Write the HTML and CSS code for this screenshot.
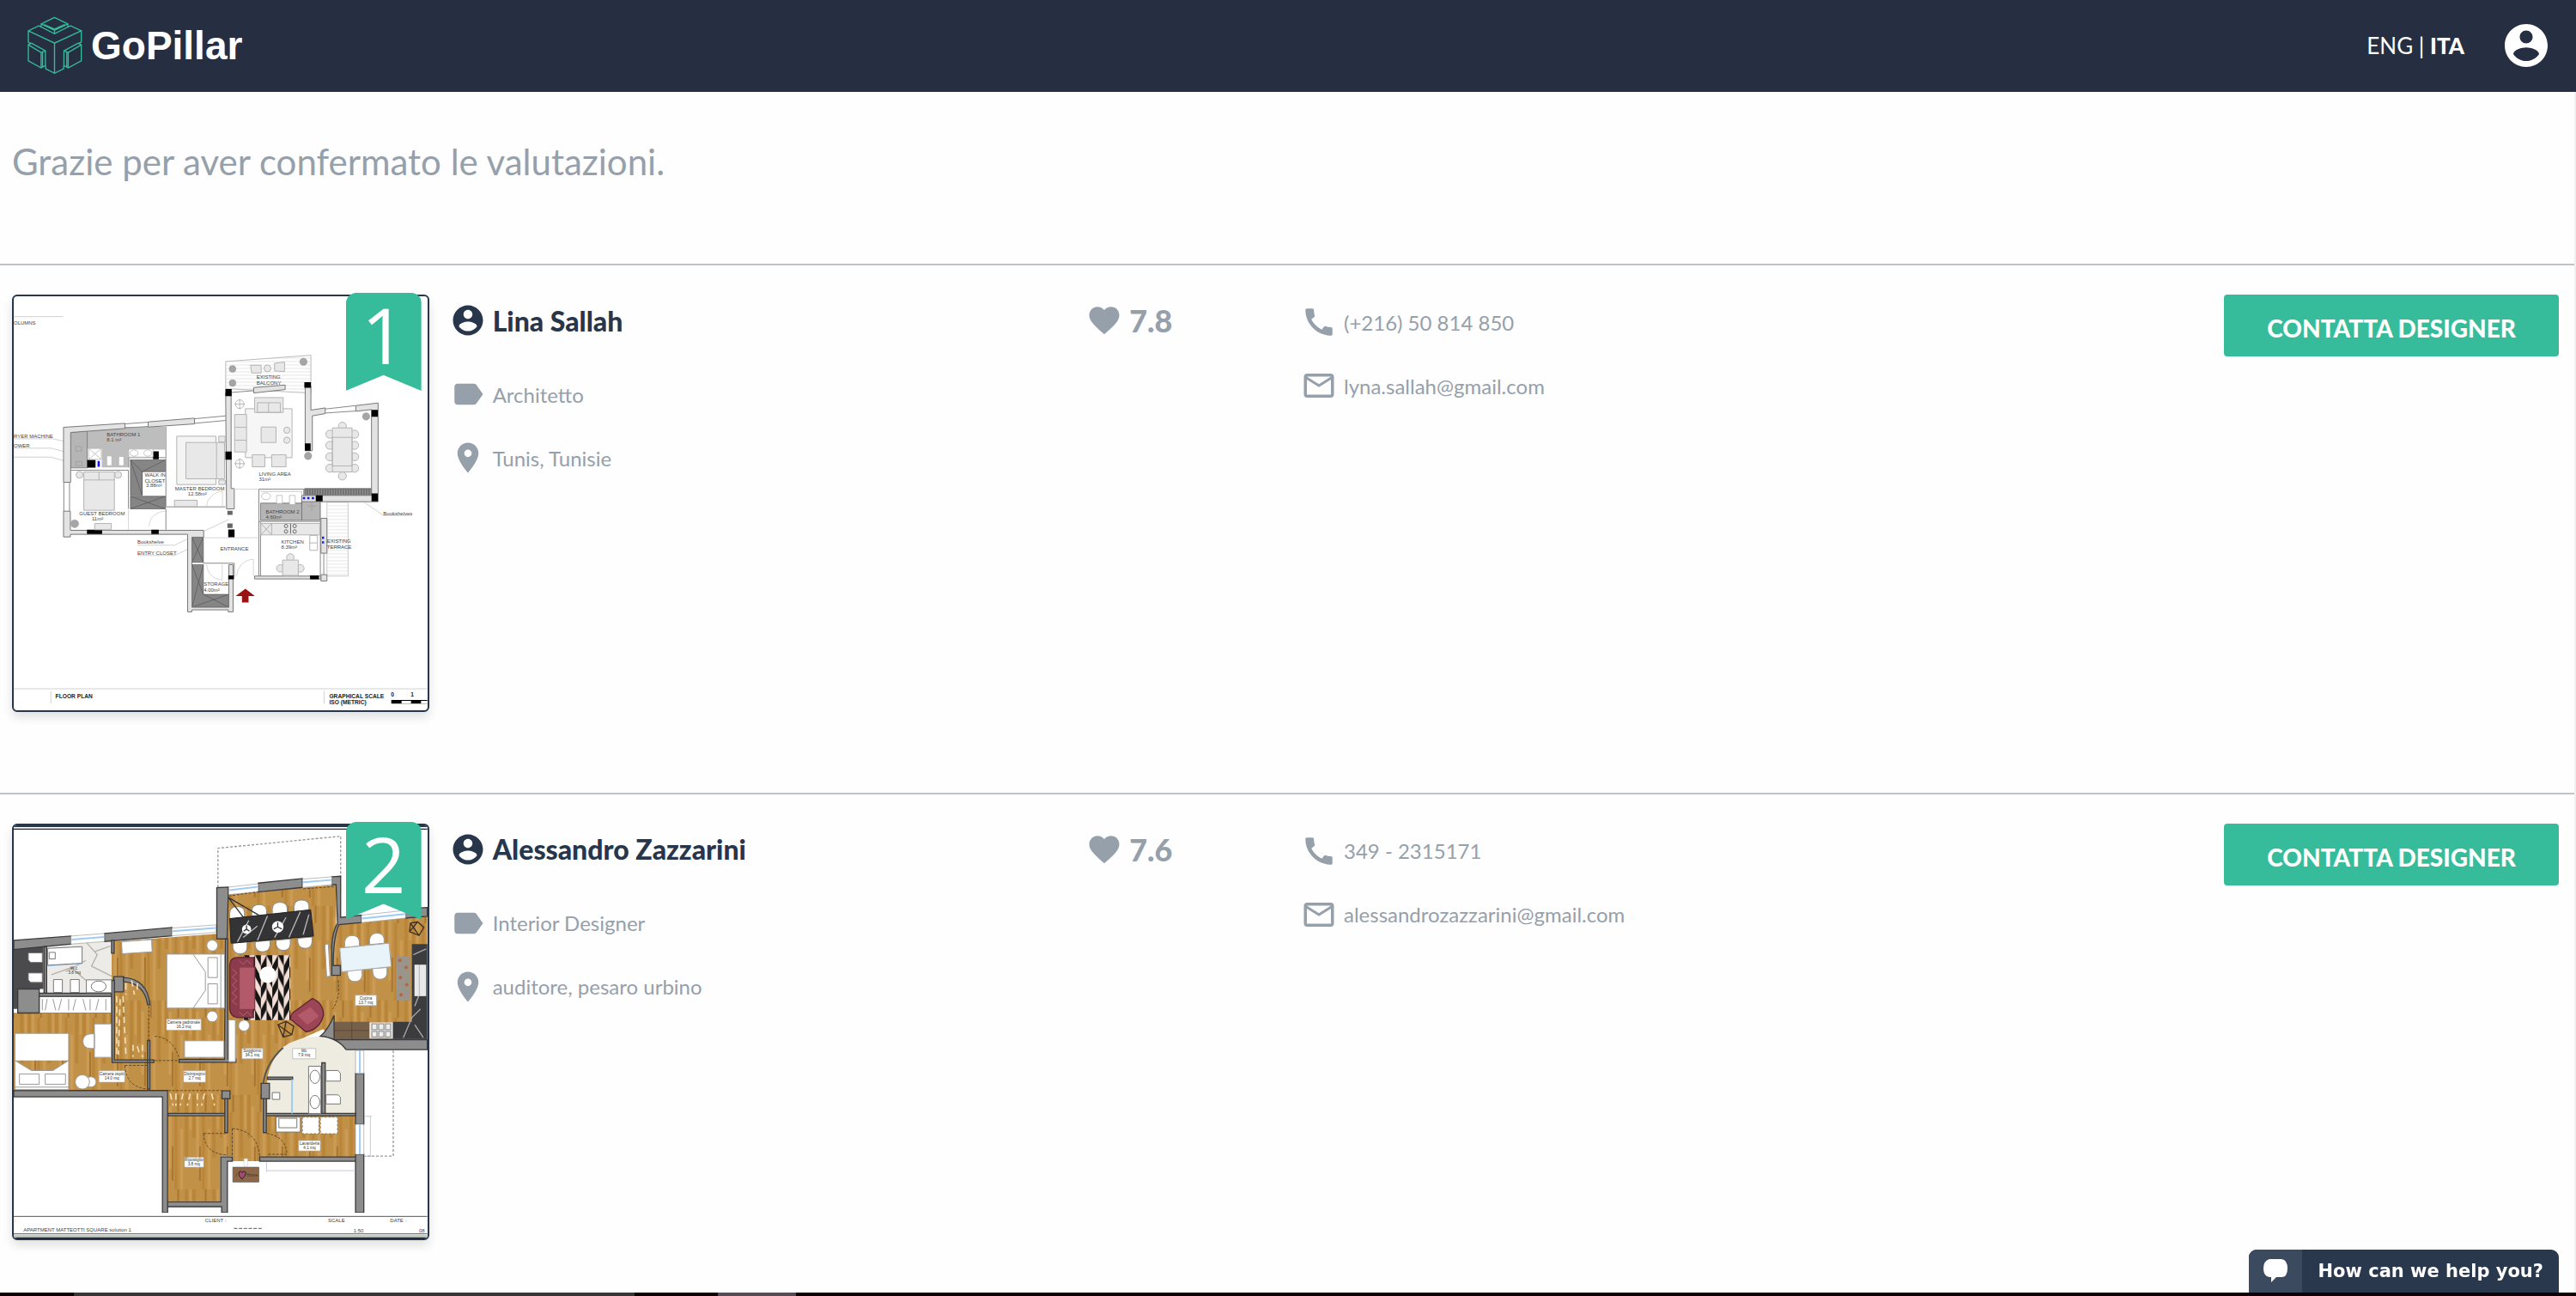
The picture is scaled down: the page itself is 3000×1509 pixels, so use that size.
FILE: index.html
```
<!DOCTYPE html>
<html lang="it">
<head>
  <meta charset="UTF-8" />
  <meta name="viewport" content="width=device-width, initial-scale=1.0">
  <title>GoPillar</title>
  <link rel="stylesheet" href="styles.css">
</head>
<body>

<svg class="sprite" aria-hidden="true">
  <symbol id="i-account" viewBox="0 0 24 24"><path d="M12 2C6.48 2 2 6.48 2 12s4.48 10 10 10 10-4.48 10-10S17.52 2 12 2zm0 3c1.66 0 3 1.34 3 3s-1.34 3-3 3-3-1.34-3-3 1.34-3 3-3zm0 14.2c-2.5 0-4.71-1.28-6-3.22.03-1.99 4-3.08 6-3.08 1.99 0 5.97 1.09 6 3.08-1.29 1.94-3.5 3.22-6 3.22z"/></symbol>
  <symbol id="i-label" viewBox="0 0 24 24"><path d="M17.63 5.84C17.27 5.33 16.67 5 16 5L5 5.01C3.9 5.01 3 5.9 3 7v10c0 1.1.9 1.99 2 1.99L16 19c.67 0 1.27-.33 1.63-.84L22 12l-4.37-6.16z"/></symbol>
  <symbol id="i-place" viewBox="0 0 24 24"><path d="M12 2C8.13 2 5 5.13 5 9c0 5.25 7 13 7 13s7-7.75 7-13c0-3.87-3.13-7-7-7zm0 9.5c-1.38 0-2.5-1.12-2.5-2.5s1.12-2.5 2.5-2.5 2.5 1.12 2.5 2.5-1.12 2.5-2.5 2.5z"/></symbol>
  <symbol id="i-heart" viewBox="0 0 24 24"><path d="M12 21.35l-1.45-1.32C5.4 15.36 2 12.28 2 8.5 2 5.42 4.42 3 7.5 3c1.74 0 3.41.81 4.5 2.09C13.09 3.81 14.76 3 16.5 3 19.58 3 22 5.42 22 8.5c0 3.78-3.4 6.86-8.55 11.54L12 21.35z"/></symbol>
  <symbol id="i-phone" viewBox="0 0 24 24"><path d="M20.01 15.38c-1.23 0-2.42-.2-3.53-.56-.35-.12-.74-.03-1.01.24l-1.57 1.97c-2.83-1.35-5.48-3.9-6.89-6.83l1.95-1.66c.27-.28.35-.67.24-1.02-.37-1.11-.56-2.3-.56-3.53 0-.54-.45-.99-.99-.99H4.19C3.65 3 3 3.24 3 3.99 3 13.28 10.73 21 20.01 21c.71 0 .99-.63.99-1.18v-3.45c0-.54-.45-.99-.99-.99z"/></symbol>
  <symbol id="i-mail" viewBox="0 0 24 24"><path d="M20 4H4c-1.1 0-1.99.9-1.99 2L2 18c0 1.1.9 2 2 2h16c1.1 0 2-.9 2-2V6c0-1.1-.9-2-2-2zm0 14H4V8l8 5 8-5v10zm-8-7L4 6h16l-8 5z"/></symbol>
</svg>

<header class="topbar">
  <a class="logo" href="#">
    <svg class="logo-mark" viewBox="37 32 193 203" aria-hidden="true">
      <path d="M132 35L179 58V68L132 92L85 68V58ZM85 58L132 80L179 58M132 80V92M95 60L132 76L168 60"/>
      <path d="M85 69L77 64L40 82V122L50 128M40 82L132 125L226 82L188 64L179 69M226 82V121L216 127M132 125V231"/>
      <path d="M50 125L40 131V187L85 212L100 204V152L50 125M40 131L85 158V212M85 158L100 152M90 158V208"/>
      <path d="M216 125L226 131V187L180 212L165 204V152L216 125M226 131L180 158V212M180 158L165 152M175 158V208"/>
      <path d="M101 204V215L132 231L164 215V204"/>
    </svg>
    <span>GoPillar</span>
  </a>
  <nav class="topbar-nav">
    <span class="langs"><a href="#">ENG</a> | <a class="active" href="#">ITA</a></span>
    <button class="account" type="button" aria-label="Account"><svg><use href="#i-account"/></svg></button>
  </nav>
</header>

<main>
  <h1>Grazie per aver confermato le valutazioni.</h1>

  <article class="designer">
    <div class="preview">
      <svg class="plan" viewBox="48 42 1446 1446" role="img" aria-label="Floor plan">
        <defs>
          <pattern id="deck" width="12" height="12" patternUnits="userSpaceOnUse"><path d="M0 6H12" stroke="#d8d8d8" stroke-width="2"/></pattern>
          <pattern id="shelf" width="9" height="30" patternUnits="userSpaceOnUse"><path d="M0 0H9V30H0z" fill="#999"/><path d="M3 0V30" stroke="#444" stroke-width="3"/></pattern>
        </defs>
        <g stroke="#bbb" stroke-width="2" fill="none">
          <path d="M48 113H221M48 540H185L300 566M48 573H180L270 598M48 604H178L275 632M48 1414H1494M178 1422V1466M1133 1422V1466"/>
          <path d="M480 912H610L800 822M480 948H610L680 915M1440 808H1340L1235 735"/>
        </g>
        <path d="M789 270L1087 248V380L789 365z" fill="url(#deck)" stroke="#bbb" stroke-width="3"/>
        <path d="M1143 760H1217V1020H1143z" fill="url(#deck)" stroke="#ccc" stroke-width="3"/>
        <!-- rooms -->
        <g stroke="#555" stroke-width="2">
          <path d="M306 498L578 498V578H450V640H356V574H306z" fill="#bdbdbd" stroke="none"/>
          <path d="M247 518L305 512V642H247z" fill="#b5b5b5"/>
          <path d="M456 614H578V655H497V738H456z" fill="#858585"/>
          <path d="M456 741H578V785H456z" fill="#858585"/>
          <path d="M456 614L497 655V738L456 614M497 655L578 614M456 785L578 741M456 741L578 785" fill="none"/>
          <path d="M911 765H940L1055 765V740H1120V825H911z" fill="#b5b5b5"/>
          <path d="M1055 760V825" fill="none"/>
          <path d="M671 884H711V972H671z" fill="#858585"/>
          <path d="M671 980H711V1084H800V1129H671z" fill="#858585"/>
          <path d="M671 884L711 972M711 884L671 972M671 980L711 1084M711 980L671 1129M711 1084L800 1129M800 1084L671 1129" fill="none"/>
          <path d="M1065 714H1298V738H1065z" fill="url(#shelf)"/>
        </g>
        <!-- walls -->
        <g fill="#e3e3e3" stroke="#777" stroke-width="3">
          <path d="M222 500L437 486V504L247 518V692H222z"/>
          <path d="M518 481L680 468V488L518 499z"/>
          <path d="M222 793H246V860H712V884H671V1129H800V980H815V1145H798V1138H671V1145H656V874H246V883H222z"/>
          <path d="M789 380H808V714H819V785H792z"/>
          <path d="M887 361L997 352V368L887 380z"/>
          <path d="M1067 355H1087V440L1137 432V452L1092 460V582H1067z"/>
          <path d="M1244 424L1322 415V760H1055V738H1299V438L1244 444z"/>
          <path d="M1122 818H1143V940H1122zM1122 1015H1143V1037H1122z"/>
          <path d="M890 1020H1122V1030H890z"/>
        </g>
        <g fill="none" stroke="#888" stroke-width="3">
          <path d="M223 692V793M243 692V793M437 488L518 482M437 502L518 497M680 470L789 460M680 486L789 476M810 378L887 372M1137 436L1244 424M1137 450L1244 443"/>
          <path d="M247 650H449V785M580 498V778H788M580 785V858M450 640V606H578M905 1020V716H1062V740M905 829H1122M711 975H819V1020"/>
          <path d="M911 830V1020M1120 830V1020M1132 940V1015"/>
        </g>
        <g fill="none" stroke="#c4c4c4" stroke-width="2">
          <path d="M722 777A60 54 0 0 1 778 724V777M521 846A58 54 0 0 1 578 793M828 1020A60 60 0 0 1 886 961V1020M723 980A54 54 0 0 0 777 1033V980M449 790V858M808 716H903M715 886H905"/>
        </g>
        <g fill="#000">
          <path d="M788 366h22v25h-22zM788 585h22v28h-22zM1064 342h23v20h-23zM1299 439h22v24h-22zM1066 556h20v26h-20zM1299 731h22v28h-22zM1104 738h24v21h-24zM305 614h29v27h-29zM535 584h20v28h-20zM304 858h53v15h-53zM529 858h26v15h-26zM798 857h22v27h-22zM798 1018h20v13h-20zM1084 1018h31v13h-31z"/>
          <path d="M795 792h18v14h-18zM795 836h18v16h-18z" fill="#666"/>
        </g>
        <path d="M341 618h8v20h-8zM1059 744h8v7h-8zM1074 744h8v7h-8zM1090 744h8v7h-8zM1126 882h7v8h-7zM1126 898h7v8h-7z" fill="#1414ff"/>
        <!-- furniture -->
        <g fill="#e8e8e8" stroke="#b4b4b4" stroke-width="3">
          <path d="M618 531H755V700H618z" fill="#f4f4f4"/><path d="M650 553H785V680H650zM757 553V680M765 531h22v20h-22zM765 684h22v16h-22z"/>
          <path d="M293 656H400V790H293zM293 684H400M346 656V684"/>
          <circle cx="278" cy="666" r="12"/><circle cx="413" cy="666" r="12"/>
          <path d="M858 435H1021V606H858z" fill="#f6f6f6"/>
          <path d="M890 396H990V448H890zM900 414H980V448H900zM939 414V448M820 455H862V586H820zM820 500H862M820 545H862M913 499H965V553H913z"/>
          <path d="M882 596H926V638H882zM950 596H1000V638H950zM610 755H689V777H610zM331 836H389V858H331z"/>
          <circle cx="1003" cy="510" r="11"/><circle cx="1003" cy="545" r="11"/>
          <circle cx="1153" cy="524" r="14"/><circle cx="1153" cy="563" r="14"/><circle cx="1153" cy="603" r="14"/><circle cx="1153" cy="643" r="14"/>
          <circle cx="1240" cy="524" r="14"/><circle cx="1240" cy="563" r="14"/><circle cx="1240" cy="603" r="14"/><circle cx="1240" cy="643" r="14"/>
          <circle cx="1197" cy="496" r="14"/><circle cx="1197" cy="670" r="14"/><path d="M1162 502H1231V656H1162zM1162 535H1231V635H1162z"/>
          <path d="M876 283L913 283V310L880 310zM960 276L995 272V305L960 303z"/><circle cx="935" cy="294" r="12"/>
          <path d="M912 836H1118V876H912zM950 836V876M912 836L950 876M950 836L912 876"/>
          <path d="M1083 878H1110V930H1083zM1083 904H1110" fill="#fff"/>
          <circle cx="1015" cy="955" r="13"/><circle cx="980" cy="993" r="13"/><circle cx="1050" cy="993" r="13"/><path d="M988 964H1043V1018H988z"/>
        </g>
        <g fill="#fff" stroke="#aaa" stroke-width="2">
          <path d="M310 574H354V612H310zL354 612M354 574L310 612M450 576H535V604H450z"/>
          <ellipse cx="469" cy="590" rx="14" ry="11"/><ellipse cx="517" cy="590" rx="14" ry="11"/>
          <path d="M373 600h18v34h-18zM415 602h18v32h-18zM967 738h20v28h-20zM1012 738h20v32h-20z"/><ellipse cx="930" cy="741" rx="16" ry="12"/>
          <path d="M911 724H1055V738"/>
        </g>
        <g fill="none" stroke="#666" stroke-width="3"><circle cx="1000" cy="845" r="6"/><circle cx="1030" cy="845" r="6"/><circle cx="1000" cy="864" r="6"/><circle cx="1030" cy="864" r="6"/><path d="M1016 836V872"/></g>
        <g fill="none" stroke="#999" stroke-width="2"><circle cx="838" cy="419" r="15"/><circle cx="838" cy="627" r="15"/><path d="M820 419H856M838 401V437M820 627H856M838 609V645M265 583h20v-16h-20zM265 634h22v-14h-22zM1075 775h30M1090 762v30"/></g>
        <g fill="#a5a5a5" stroke="#888"><circle cx="813" cy="296" r="12"/><circle cx="813" cy="345" r="12"/><circle cx="1061" cy="271" r="13"/><circle cx="1280" cy="462" r="13"/><circle cx="1077" cy="600" r="13"/><circle cx="261" cy="837" r="14"/></g>
        <path d="M858 1064L891 1090H869V1112H846V1090H824z" fill="#9b1414"/>
        <g class="plan-text">
          <text x="48" y="140">OLUMNS</text><text x="48" y="536">RYER MACHINE</text><text x="48" y="569">OWER</text>
          <text x="373" y="531">BATHROOM 1</text><text x="373" y="548">8.1 m²</text>
          <text x="506" y="671">WALK IN</text><text x="506" y="692">CLOSET</text><text x="510" y="708">3.88m²</text>
          <text x="612" y="721">MASTER BEDROOM</text><text x="657" y="740">12.58m²</text>
          <text x="277" y="808">GUEST BEDROOM</text><text x="321" y="827">11m²</text>
          <text x="897" y="330">EXISTING</text><text x="897" y="351">BALCONY</text>
          <text x="905" y="668">LIVING AREA</text><text x="905" y="688">31m²</text>
          <text x="929" y="802">BATHROOM 2</text><text x="929" y="819">4.60m²</text>
          <text x="983" y="906">KITCHEN</text><text x="983" y="924">8.39m²</text>
          <text x="1143" y="905">EXISTING</text><text x="1143" y="924">TERRACE</text>
          <text x="770" y="931">ENTRANCE</text><text x="712" y="1054">STORAGE</text><text x="712" y="1074">4.00m²</text>
          <text x="480" y="908">Bookshelve</text><text x="480" y="945">ENTRY CLOSET</text><text x="1340" y="807">Bookshelves</text>
        </g>
        <g class="plan-text strong">
          <text x="194" y="1446">FLOOR PLAN</text><text x="1151" y="1446">GRAPHICAL SCALE</text><text x="1151" y="1468">ISO (METRIC)</text><text x="1367" y="1441">0</text><text x="1436" y="1441">1</text>
        </g>
        <path d="M1368 1453H1494V1466H1368zM1404 1456H1437V1465H1404zM1472 1456H1494V1465H1472z" fill-rule="evenodd"/>
      </svg>
      <span class="ribbon">1</span>
    </div>
    <div class="profile">
      <h2 class="item name"><svg><use href="#i-account"/></svg>Lina Sallah</h2>
      <p class="item"><svg><use href="#i-label"/></svg>Architetto</p>
      <p class="item"><svg><use href="#i-place"/></svg>Tunis, Tunisie</p>
    </div>
    <div class="score">
      <p class="item"><svg><use href="#i-heart"/></svg>7.8</p>
    </div>
    <div class="contacts">
      <p class="item"><svg><use href="#i-phone"/></svg>(+216) 50 814 850</p>
      <p class="item"><svg><use href="#i-mail"/></svg>lyna.sallah@gmail.com</p>
    </div>
    <div class="action">
      <button class="btn" type="button">CONTATTA DESIGNER</button>
    </div>
  </article>

  <article class="designer">
    <div class="preview">
      <svg class="plan" viewBox="48 48 1446 1446" role="img" aria-label="Apartment Matteotti Square">
        <defs>
          <pattern id="wood" width="96" height="330" patternUnits="userSpaceOnUse">
            <path d="M0 0H96V330H0z" fill="#c29148"/>
            <path d="M0 0H12V150H0zM34 60H44V330H34zM70 0H82V220H70z" fill="#b98539"/>
            <path d="M14 40H24V260H14zM54 120H64V330H54zM86 0H94V120H86z" fill="#cc9c54"/>
            <path d="M44 0H50V60H44zM24 180H30V300H24z" fill="#a87530"/>
          </pattern>
          <pattern id="rug" x="852" y="502" width="40" height="76" patternUnits="userSpaceOnUse">
            <path d="M0 0H40V76H0z" fill="#f3dfd5"/>
            <path d="M0 0L20 0V38zM20 38H40V0zM0 38V76H20zM20 38H40L20 76z" fill="#151515"/>
          </pattern>
        </defs>
        <path d="M48 48H1494V54H48z" fill="#28364b"/>
        <path d="M48 61H1494" stroke="#222" stroke-width="4"/>
        <path d="M762 265V128L1191 86V230M1375 835V1204H1275" fill="none" stroke="#999" stroke-width="4" stroke-dasharray="9 6"/>
        <!-- wooden floors -->
        <g fill="url(#wood)">
          <path d="M390 455L790 425V290L1175 255V400L1185 390L1494 365V798H1165L1130 760L985 825L935 930V1210H908V1222H812V1205H770V1362H588V975H48V703H390z"/>
          <path d="M932 1062H1243V1208H932z"/>
        </g>
        <!-- bathrooms -->
        <path d="M48 480L152 470V620H62V690H48z" fill="#4b4b4e"/>
        <path d="M163 462L390 452V635H163z" fill="#ecebe8"/>
        <path d="M300 455L340 500L320 540L390 575M230 560L300 520M330 490L385 470M180 570L250 545L300 590" fill="none" stroke="#b5b2aa" stroke-width="4"/>
        <path d="M137 646H390V704H137z" fill="#fff" stroke="#888" stroke-width="3"/>
        <path d="M935 1055V930Q950 850 1010 810Q1100 765 1185 805L1210 830H1243V1055z" fill="#eeece1"/>
        <!-- kitchen -->
        <path d="M1440 463H1494V795H1375V735H1440z" fill="#3c3c3e"/>
        <path d="M1445 500L1490 480M1450 680L1485 590M1410 790L1440 720L1470 690M1480 790L1450 745" stroke="#aaa" stroke-width="4" fill="none"/>
        <path d="M1168 735H1292V795H1168z" fill="#76604a"/><path d="M1230 735V795M1168 765H1292" stroke="#5b4937" stroke-width="3"/>
        <path d="M1292 737H1372V792H1292z" fill="#eee"/>
        <g fill="none" stroke="#999" stroke-width="4"><path d="M1300 742h18v20h-18zM1324 742h18v20h-18zM1348 742h18v20h-18zM1300 768h18v20h-18zM1324 768h18v20h-18zM1348 768h18v20h-18z"/></g>
        <path d="M1449 535H1490V645H1449z" fill="#e8e8ea"/><path d="M1466 535V645" stroke="#999" stroke-width="2"/>
        <path d="M1385 506H1435V660H1385z" fill="#9b948a"/>
        <g fill="#b7653a"><circle cx="1398" cy="520" r="6"/><circle cx="1420" cy="545" r="6"/><circle cx="1400" cy="580" r="6"/><circle cx="1422" cy="605" r="6"/><circle cx="1402" cy="640" r="6"/></g>
        <!-- walls -->
        <g fill="#8d8d8d" stroke="#3b3b3b" stroke-width="4">
          <path d="M48 450L248 435V463L48 482zM365 426L601 405V434L365 454zM758 266L798 264V290L794 445H758zM903 250L1057 234V265L903 281zM1160 228L1191 226V370L1264 362V388L1185 395Q1165 440 1165 538H1190V572H1160V470Q1162 420 1180 390L1175 255L1160 256zM1418 340L1494 335V366L1418 372z"/>
          <path d="M48 975H586V1402H568V997H48zM586 1364H772V1222V1207H812V1222H795V1402H775V1381H586zM908 1207H1243V1222H908zM1243 915H1272V1093H1243zM1243 1198H1272V1402H1243z"/>
          <path d="M62 620H137V704H62zM398 577H432V630H398zM776 976H804V1004H776zM913 950H942V1004H913z"/>
          <path d="M1168 712V797H1494V832H1210Q1180 790 1120 785Q1145 765 1168 712z"/>
          <path d="M154 472H163V635H154zM137 635H390V646H137zM390 450H399V495H390zM390 590H400V868H538V877H392zM432 580Q515 585 524 675H516Q505 600 432 594zM516 800H524V970H516zM788 445H796V865H825V876H626V866H785zM588 1055H786V1063H588zM786 1004H796V1122H786zM921 1004H931V1122H921zM931 1055H1243V1063H931zM935 928H1023V936H935zM1125 878H1137V1055H1125z"/>
        </g>
        <path d="M921 948Q930 880 990 825" fill="none" stroke="#555" stroke-width="6"/>
        <!-- windows -->
        <g fill="#fff" stroke="#9c9c9c" stroke-width="2"><path d="M248 435L365 426V454L248 463zM601 407L755 396V422L601 434zM800 264L903 252V280L800 290zM1058 236L1160 228V255L1058 265zM1264 362L1418 345V372L1264 388zM1243 835H1272V915H1243zM1243 1093H1272V1198H1243z"/></g>
        <path d="M250 447L363 438M603 418L753 407M802 275L901 263M1060 247L1158 239M1266 374L1416 358M1258 835V915M1258 1093V1198M165 538L287 530M1021 936V1055" stroke="#9fcbf5" stroke-width="6" fill="none"/>
        <!-- dining table and sofa area -->
        <g fill="#fff" stroke="#888" stroke-width="3">
          <path d="M803 375V355Q805 332 829 332T855 352V375zM880 368V348Q882 325 906 325T932 345V362zM952 360V340Q954 317 978 317T1004 337V355zM1028 350V332Q1030 309 1054 309T1080 329V345z"/>
          <path d="M814 460V475Q818 497 840 497T864 475V455zM892 455V468Q896 490 918 490T944 468V450zM965 450V463Q969 485 991 485T1015 463V445zM1041 443V456Q1045 478 1067 478T1091 456V438z"/>
        </g>
        <path d="M803 374L1086 343L1096 435L808 460z" fill="#343436" stroke="#222" stroke-width="3"/>
        <path d="M830 455L870 380M900 450L935 365M1010 440L1050 350M1060 430L1080 360M960 440L1000 370M850 440L900 400" stroke="#bbb" stroke-width="4" fill="none"/>
        <circle cx="862" cy="411" r="16" fill="#fff"/><circle cx="971" cy="403" r="20" fill="#fff"/><path d="M862 411V398M862 411L852 418M862 411L872 418M971 403V387M971 403L957 410M971 403L985 410M798 300L855 375M798 300L905 362" stroke="#333" stroke-width="4" fill="none"/>
        <path d="M850 502H1015V729H850z" fill="url(#rug)"/>
        <path d="M803 535Q805 510 830 510H888V545H890V690H886V720H830Q805 715 803 690z" fill="#8c3b4c" stroke="#5a2430" stroke-width="4"/>
        <path d="M838 545H890V690H838z" fill="#b2596a"/>
        <path d="M812 550l16 14-16 14 16 14-16 14 16 14-16 14 16 14-16 14 16 14M836 520l14 14 14-14 14 14M836 700l14 14 14-14 14 14" stroke="#c77888" stroke-width="2" fill="none"/>
        <circle cx="936" cy="570" r="29" fill="#fff"/>
        <path d="M1092 653Q1130 668 1131 710Q1120 760 1070 770L1015 725Q1015 705 1035 695z" fill="#9c4557" stroke="#5a2430" stroke-width="4"/><path d="M1085 683L1115 715L1075 745L1040 712z" fill="#b2596a"/>
        <g fill="none" stroke="#3d3020" stroke-width="4"><path d="M972 745L1000 733L1027 750L1020 780L990 788zL1020 780M1000 733L990 788M1435 390L1460 385L1482 405L1465 433L1432 420zL1465 433M1460 385L1432 420"/></g>
        <g fill="#fff" stroke="#999" stroke-width="3">
          <circle cx="742" cy="468" r="19"/><circle cx="742" cy="716" r="19"/><circle cx="853" cy="748" r="19"/><circle cx="318" cy="945" r="18"/><circle cx="288" cy="945" r="25"/>
          <path d="M799 728H823V874H799zM645 801H783V859H645zM425 455L530 447L532 490L427 497z"/>
          <path d="M583 498H785V687H583zM727 510H760V580H727zM727 602H760V672H727zM676 500L718 560V625L676 686M772 498V687"/>
          <path d="M52 775H240V972H52zM68 917H137V953H68zM158 917H229V953H158zM52 870L110 905H185L240 870M52 963H240"/>
          <path d="M330 742H389V859H330zM330 777H315Q290 780 290 803T315 828H330z"/>
          <path d="M1205 475V455Q1210 433 1231 433T1256 452V470zM1292 465V447Q1297 425 1318 425T1343 444V460zM1215 556V570Q1219 594 1241 594T1266 572V552zM1303 548V562Q1307 586 1329 586T1353 564V545z"/>
          <path d="M1136 465L1148 462L1154 575L1142 577z"/>
        </g>
        <path d="M1188 477L1360 460L1368 542L1195 560z" fill="#e9f3fa" stroke="#aaa" stroke-width="3"/>
        <!-- sanitary ware -->
        <g fill="#fff" stroke="#777" stroke-width="3">
          <path d="M99 494H148V527H107L99 518zM99 564H148V597H107L99 588zM187 587H218V632H187zM246 587H277V632H246zM302 588H390V633H302zM172 492H193V515H172zM167 478L287 472V530L167 537z"/>
          <ellipse cx="345" cy="611" rx="26" ry="19"/>
          <path d="M1079 890H1122V1055H1079zM1140 905H1182L1190 915V942H1140zM1140 990H1182L1190 998V1022H1140zM952 982H978V1006H952z"/>
          <ellipse cx="1101" cy="927" rx="17" ry="23"/><ellipse cx="1101" cy="1015" rx="17" ry="23"/>
          <path d="M965 1068H1050V1120H965zM975 1072H1038V1105H975z"/>
          <path d="M1057 1068H1115V1126H1057zM1120 1068H1180V1126H1120z" stroke-dasharray="8 6"/>
        </g>
        <!-- clothes rails and door swings -->
        <path d="M408 645V855M420 655L414 850M430 645L440 850M440 600V640M460 590L470 640M480 600V635M465 815V858M480 820L490 855M498 815V858M595 985L605 1028M615 985V1028M640 985L630 1028M665 985L655 1028M690 985V1028M715 985L705 1028M740 985L750 1028" stroke="#f3dfb8" stroke-width="5" stroke-dasharray="22 14" fill="none"/>
        <path d="M148 655V695M165 655L158 695M185 655L195 695M215 655L205 695M240 655V695M265 655L255 695M290 655L300 695M315 655V695M345 655L335 695M370 655V695" stroke="#999" stroke-width="3" fill="none"/>
        <g fill="none" stroke="#5b4a2c" stroke-width="3" stroke-dasharray="9 5">
          <path d="M540 785Q610 790 628 870H540M437 887Q440 965 520 970M437 887H520M712 1125Q715 1195 790 1200M712 1125H790M812 1108Q900 1115 908 1205M812 1108V1205M932 1125Q1000 1135 1003 1198H932M588 975H776M1183 590Q1190 650 1163 690M520 680V800M800 295L905 280M1060 270L1170 262"/>
        </g>
        <path d="M1295 1065V1205M932 1255H1243M932 1225V1260M1275 1065H1300M1275 1205H1300" stroke="#a8b0cc" stroke-width="2" fill="none"/>
        <path d="M814 1243H905V1295H814z" fill="#8d6748" stroke="#555" stroke-width="2"/><path d="M853 1213h13v25h-13z" fill="#fff" stroke="#aaa"/>
        <path d="M846 1285Q830 1268 836 1260T846 1262Q852 1254 858 1260T846 1285z" fill="#a44b72" stroke="#222" stroke-width="3"/>
        <!-- room tags -->
        <path d="M582 726H703V764H582zM346 906H436V946H346zM642 906H719V946H642zM846 828H919V864H846zM1023 828H1104V864H1023zM1242 642H1316V678H1242zM1044 1150H1120V1186H1044zM645 1208H712V1243H645z" fill="#fff" stroke="#aaa" stroke-width="2"/>
        <g class="tag-text">
          <text x="642" y="742">Camera padronale</text><text x="642" y="757">16.2 mq</text>
          <text x="391" y="922">Camera ospiti</text><text x="391" y="938">14.0 mq</text>
          <text x="680" y="922">Disimpegno</text><text x="680" y="938">2.7 mq</text>
          <text x="882" y="842">Soggiorno</text><text x="882" y="857">34.1 mq</text>
          <text x="1063" y="842">Wc</text><text x="1063" y="857">7.9 mq</text>
          <text x="1279" y="657">Cucina</text><text x="1279" y="672">13.7 mq</text>
          <text x="1082" y="1164">Lavanderia</text><text x="1082" y="1179">4.1 mq</text>
          <text x="678" y="1222">Ripostiglio</text><text x="678" y="1237">3.8 mq</text>
          <text x="260" y="552">W.c.</text><text x="260" y="567">3.8 mq</text>
          <text x="826" y="1277">I</text><text x="882" y="1277">Home</text>
        </g>
        <path d="M48 1402H1494V1494H48z" fill="#fff"/>
        <path d="M48 1415H1494M48 1476H1494" stroke="#555" stroke-width="3"/>
        <path d="M48 1480H1494V1488H48z" fill="#c3c9c3"/><path d="M48 1488H1494V1494H48z" fill="#222"/>
        <path d="M818 1457H918" stroke="#555" stroke-width="3" stroke-dasharray="12 5"/>
        <g class="plan-text">
          <text x="48" y="1434">:</text><text x="717" y="1434">CLIENT :</text><text x="1147" y="1434">SCALE</text><text x="1364" y="1434">DATE :</text>
          <text x="82" y="1467">APARTMENT MATTEOTTI SQUARE solution 1</text><text x="1236" y="1472">1:50</text><text x="1465" y="1472">08</text>
        </g>
      </svg>
      <span class="ribbon">2</span>
    </div>
    <div class="profile">
      <h2 class="item name"><svg><use href="#i-account"/></svg>Alessandro Zazzarini</h2>
      <p class="item"><svg><use href="#i-label"/></svg>Interior Designer</p>
      <p class="item"><svg><use href="#i-place"/></svg>auditore, pesaro urbino</p>
    </div>
    <div class="score">
      <p class="item"><svg><use href="#i-heart"/></svg>7.6</p>
    </div>
    <div class="contacts">
      <p class="item"><svg><use href="#i-phone"/></svg>349 - 2315171</p>
      <p class="item"><svg><use href="#i-mail"/></svg>alessandrozazzarini@gmail.com</p>
    </div>
    <div class="action">
      <button class="btn" type="button">CONTATTA DESIGNER</button>
    </div>
  </article>
</main>

<button class="chat" type="button">
  <span class="chat-icon">
    <svg viewBox="0 0 30 28" aria-hidden="true"><path d="M8 0H22Q29 1 29 11T22 21H16L10 27V21H8Q1 20 1 11T8 0z"/></svg>
  </span>
  <span class="chat-label">How can we help you?</span>
</button>
<div class="dock"><span class="dock-search"></span><span class="dock-app"></span></div>

</body>
</html>
```
FILE: styles.css
```
* {
  box-sizing: border-box;
}
body {
  margin: 0;
  height: 100vh;
  overflow: hidden;
  display: flex;
  flex-direction: column;
  font-family: Lato, "Open Sans", sans-serif;
  font-size: 24px;
  color: #95a0ab;
  background: #fefefe;
}
h1, h2, p {
  margin: 0;
}
a {
  color: inherit;
  text-decoration: none;
}
button {
  font-family: inherit;
  border: 0;
  padding: 0;
  cursor: pointer;
}
.sprite {
  display: none;
}

/* top bar */
.topbar {
  flex: none;
  display: flex;
  align-items: center;
  justify-content: space-between;
  height: 107px;
  padding: 0 28px 2px 32px;
  background: #252f41;
  color: #fff;
}
.logo {
  display: flex;
  align-items: center;
  gap: 10px;
  font-family: "Liberation Sans", Arial, sans-serif;
  font-size: 46px;
  font-weight: bold;
}
.logo-mark {
  width: 64px;
  height: 68px;
  fill: none;
  stroke: #36bc9b;
  stroke-width: 4;
}
.topbar-nav {
  display: flex;
  align-items: center;
  gap: 42px;
  font-size: 26px;
}
.active {
  font-weight: 900;
}
.account {
  display: flex;
  background: none;
}
.account svg {
  width: 60px;
  height: 60px;
  fill: #fff;
}

/* designers list */
main {
  flex: 1;
  min-height: 0;
  border-right: 2px solid #f0f0f0;
}
h1 {
  padding: 54px 14px 91px;
  font-size: 42px;
  font-weight: 400;
  line-height: 55px;
}
.designer {
  display: grid;
  grid-template-columns: 2fr 3fr 1fr 3fr 3fr;
  align-items: start;
  padding: 34px 0 94px;
  border-top: 2px solid #bdc3c7;
}
.preview {
  position: relative;
  margin-left: 14px;
}
.plan {
  display: block;
  width: 100%;
  height: auto;
  border: 2px solid #28364b;
  border-radius: 6px;
  background: #fff;
  box-shadow: 0 6px 12px rgba(0, 0, 0, 0.12);
}
.plan-text {
  font-family: "Liberation Sans", Arial, sans-serif;
  font-size: 18px;
  fill: #444;
}
.strong {
  font-size: 20px;
  font-weight: bold;
  fill: #222;
}
.tag-text {
  font-family: "Liberation Sans", Arial, sans-serif;
  font-size: 14px;
  fill: #333;
  text-anchor: middle;
}
.ribbon {
  position: absolute;
  top: -2px;
  right: 9px;
  width: 88px;
  height: 114px;
  border-radius: 12px 12px 0 0;
  background: #36bc9b;
  clip-path: polygon(0 0, 100% 0, 100% 100%, 50% 84%, 0 100%);
  color: #fff;
  font-family: "Open Sans", sans-serif;
  font-size: 90px;
  line-height: 96px;
  text-align: center;
}
.item {
  display: flex;
  align-items: center;
  gap: 8px;
  height: 32px;
}
.item svg {
  flex: none;
  width: 42px;
  height: 42px;
  fill: currentColor;
}
.profile {
  display: grid;
  gap: 42px;
  padding-left: 24px;
}
.name {
  height: 60px;
  margin-bottom: -2px;
  font-size: 32px;
  font-weight: 900;
  color: #28364b;
}
.score {
  padding-left: 16px;
}
.score .item {
  height: 60px;
  font-size: 36px;
  font-weight: 900;
}
.contacts {
  display: grid;
  gap: 42px;
  padding: 16px 0 0 16px;
}
.action {
  padding-right: 18px;
  text-align: right;
}
.btn {
  padding: 6px 50px 0;
  height: 72px;
  border-radius: 4px;
  background: #36bc9b;
  color: #fff;
  font-size: 28px;
  font-weight: 900;
}

/* chat button */
.chat {
  position: fixed;
  right: 20px;
  bottom: 4px;
  display: flex;
  height: 50px;
  border-radius: 9px 9px 0 0;
  overflow: hidden;
  background: #2a384d;
  color: #fff;
  font-family: "DejaVu Sans", Verdana, sans-serif;
  font-size: 20px;
  font-weight: bold;
}
.chat-icon {
  display: flex;
  align-items: center;
  justify-content: center;
  width: 62px;
  height: 100%;
  background: #3c4a60;
}
.chat-icon svg {
  width: 30px;
  height: 28px;
  fill: #fff;
}
.chat-label {
  padding: 0 18px;
  align-self: center;
  font-size: 21px;
}
.dock {
  position: fixed;
  left: 0;
  right: 0;
  bottom: 0;
  display: flex;
  height: 4px;
  padding-left: 86px;
  gap: 97px;
  background: #100004;
}
.dock-search {
  width: 653px;
  background: #383536;
}
.dock-app {
  width: 91px;
  background: #584a54;
}
```
